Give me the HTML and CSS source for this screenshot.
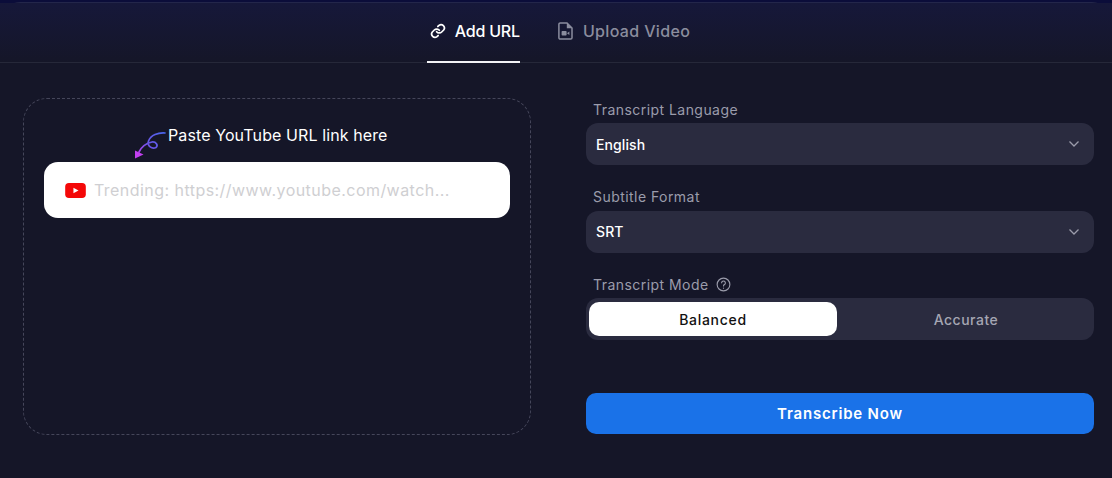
FILE: index.html
```html
<!DOCTYPE html>
<html lang="en">
<head>
    <meta charset="UTF-8">
    <meta name="viewport" content="width=device-width, initial-scale=1.0">
    <title>Transcript Generator</title>
    <link rel="stylesheet" href="styles.css">
</head>
<body>
    <div class="panel">
        <div class="tabs">
            <div class="tab active">
                <svg class="tab-icon" viewBox="0 0 24 24" fill="none" stroke="currentColor" stroke-width="2.600" stroke-linecap="round" stroke-linejoin="round">
                    <path d="M10 13a5 5 0 0 0 7.500.500l3-3a5 5 0 0 0-7-7l-1.700 1.700"/>
                    <path d="M14 11a5 5 0 0 0-7.500-.500l-3 3a5 5 0 0 0 7 7l1.700-1.700"/>
                </svg>
                <span>Add URL</span>
            </div>
            <div class="tab">
                <svg class="file-icon" viewBox="0 0 15 18" fill="none">
                    <path d="M2.200 1H9l5 5v9.800a1.300 1.300 0 0 1-1.300 1.300H2.200a1.300 1.300 0 0 1-1.300-1.300V2.300A1.300 1.300 0 0 1 2.200 1z" stroke="currentColor" stroke-width="1.500"/>
                    <path d="M8.800 1v5.200H14z" fill="currentColor"/>
                    <rect x="3.600" y="9" width="5" height="4.600" rx=".8" fill="currentColor"/>
                    <path d="M9 11.300l2.400-1.800v3.600z" fill="currentColor"/>
                </svg>
                <span>Upload Video</span>
            </div>
        </div>

        <div class="content">
            <div class="drop-box">
                <div class="paste-hint">
                    <svg class="hint-arrow" viewBox="0 0 32 28" fill="none">
                        <defs>
                            <linearGradient id="arrowGrad" x1="31" y1="2" x2="3" y2="25" gradientUnits="userSpaceOnUse">
                                <stop offset="0" stop-color="#4a66ee"/>
                                <stop offset=".55" stop-color="#6a55e6"/>
                                <stop offset="1" stop-color="#c23ff0"/>
                            </linearGradient>
                        </defs>
                        <path d="M31 2C24 1.500 17 4 14.500 10 13 15 18 18.500 22 16.500 24.500 14.500 22 10.500 18 11 13 12 8 15 5 21" stroke="url(#arrowGrad)" stroke-width="1.700" stroke-linecap="round"/>
                        <path d="M1 27.500V19.500L9.500 23.500z" fill="#c23ff0"/>
                    </svg>
                    <span>Paste YouTube URL link here</span>
                </div>
                <div class="url-input">
                    <svg class="yt-icon" viewBox="0 0 22 16">
                        <rect width="22" height="16" rx="4" fill="#f40808"/>
                        <path d="M8.800 5l5.400 3-5.400 3z" fill="#fff"/>
                    </svg>
                    <span class="placeholder">Trending: https://www.youtube.com/watch...</span>
                </div>
            </div>

            <div class="options">
                <div class="field-label">Transcript Language</div>
                <div class="select-box">
                    <span>English</span>
                    <svg class="chevron" viewBox="0 0 12 8" fill="none" stroke="currentColor" stroke-width="1.300"><path d="M1.500 1.500L6 6l4.500-4.500"/></svg>
                </div>

                <div class="field-label">Subtitle Format</div>
                <div class="select-box">
                    <span>SRT</span>
                    <svg class="chevron" viewBox="0 0 12 8" fill="none" stroke="currentColor" stroke-width="1.300"><path d="M1.500 1.500L6 6l4.500-4.500"/></svg>
                </div>

                <div class="field-label">
                    Transcript Mode
                    <svg class="help-icon" viewBox="0 0 16 16" fill="none" stroke="currentColor" stroke-width="1.200" stroke-linecap="round">
                        <circle cx="8" cy="8" r="6.800"/>
                        <path d="M6 6.200a2 2 0 1 1 3 1.800c-.7.400-1 .8-1 1.500"/>
                        <path d="M8 11.800v.1"/>
                    </svg>
                </div>
                <div class="mode-toggle">
                    <div class="mode-btn selected">Balanced</div>
                    <div class="mode-btn">Accurate</div>
                </div>

                <button class="transcribe-btn">Transcribe Now</button>
            </div>
        </div>
    </div>
</body>
</html>
```

FILE: styles.css
```css
* {
    margin: 0;
    padding: 0;
    box-sizing: border-box;
    font-family: 'Inter', 'Liberation Sans', sans-serif;
}

body {
    background: #0b0d3a;
    width: 1112px;
    height: 478px;
    overflow: hidden;
    padding-top: 2px;
}

.panel {
    height: 476px;
    background: #151628;
    border-top: 1px solid #23264a;
    border-radius: 20px 20px 0 0;
}

.tabs {
    height: 60px;
    display: flex;
    justify-content: center;
    gap: 37px;
    padding-left: 6px;
    border-bottom: 1px solid #262839;
    background: linear-gradient(#16183a, #151628);
}

.tab {
    display: flex;
    align-items: center;
    gap: 10px;
    height: 60px;
    padding: 0 1px 4px 1px;
    color: #8b8d9e;
    font-size: 16px;
    font-weight: 500;
    letter-spacing: 0.35px;
}

.tab.active {
    gap: 9px;
    padding: 0 0 2px 3px;
    color: #fff;
    letter-spacing: -0.2px;
    border-bottom: 2px solid #f2f2f5;
}

.tab-icon {
    width: 16px;
    height: 16px;
}

.file-icon {
    width: 15px;
    height: 18px;
}

.content {
    display: flex;
    padding: 35px 18px 0 23px;
    gap: 55px;
}

.drop-box {
    width: 508px;
    height: 337px;
    border: 1px dashed #45465a;
    border-radius: 24px;
    padding: 0 20px;
}

.paste-hint {
    height: 63px;
    display: flex;
    align-items: flex-start;
    gap: 2px;
    padding-top: 26px;
    padding-left: 90px;
    color: #fff;
    font-size: 16px;
    letter-spacing: 0.1px;
}

.hint-arrow {
    width: 32px;
    height: 28px;
    margin-top: 6px;
}

.url-input {
    height: 56px;
    background: #fff;
    border-radius: 14px;
    display: flex;
    align-items: center;
    gap: 8px;
    padding-left: 21px;
}

.yt-icon {
    width: 21px;
    height: 15px;
    flex-shrink: 0;
}

.placeholder {
    color: #cfcfd2;
    font-size: 16px;
    letter-spacing: 0.45px;
}

.options {
    width: 508px;
}

.field-label {
    display: flex;
    align-items: center;
    gap: 7px;
    height: 22px;
    padding-left: 7px;
    margin-bottom: 3px;
    color: #9b9cab;
    font-size: 14px;
    letter-spacing: 0.45px;
}

.help-icon {
    width: 15px;
    height: 15px;
}

.select-box {
    height: 42px;
    background: #2a2b3f;
    border-radius: 12px;
    display: flex;
    align-items: center;
    justify-content: space-between;
    padding: 0 14px 0 10px;
    margin-bottom: 20.5px;
    color: #fff;
    font-size: 14px;
    font-weight: 500;
    letter-spacing: 0.1px;
}

.chevron {
    width: 12px;
    height: 8px;
    color: #9b9cab;
}

.mode-toggle {
    height: 42px;
    background: #2a2b3f;
    border-radius: 12px;
    display: flex;
    padding: 4px 3px;
}

.mode-btn {
    flex: 1;
    display: flex;
    align-items: center;
    justify-content: center;
    padding-left: 4px;
    color: #a5a6b3;
    font-size: 14px;
    font-weight: 500;
    letter-spacing: 0.5px;
    border-radius: 10px;
}

.mode-btn.selected {
    flex: none;
    width: 248px;
    padding-left: 0;
    background: #fff;
    color: #111;
    letter-spacing: 0.7px;
}

.transcribe-btn {
    display: block;
    width: 100%;
    height: 41px;
    margin-top: 53px;
    background: #1a72e8;
    border: none;
    border-radius: 10px;
    color: #fff;
    font-size: 15px;
    font-weight: 600;
    letter-spacing: 0.8px;
}
```
